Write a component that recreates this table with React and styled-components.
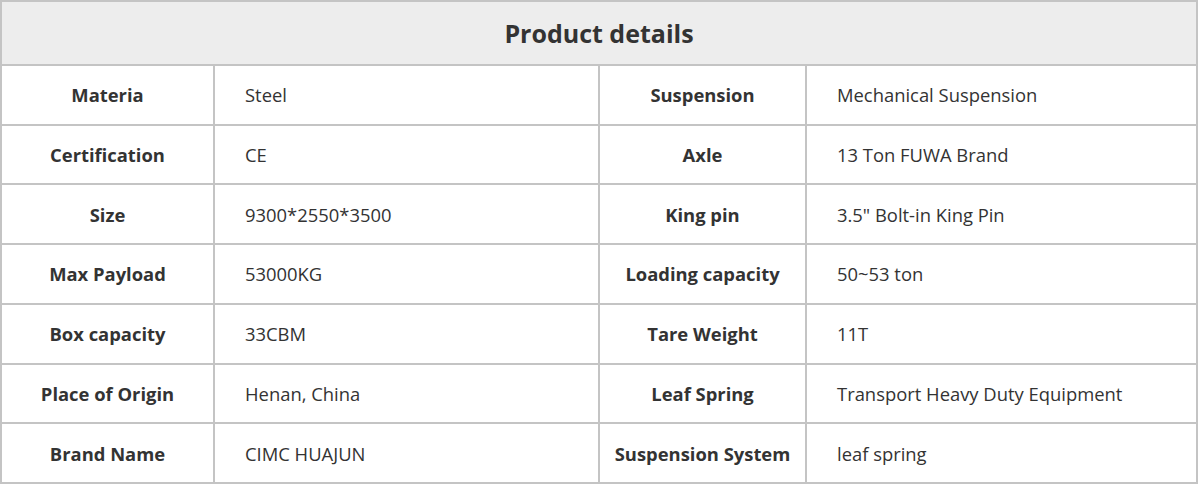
import styled, { createGlobalStyle } from "styled-components";

const Global = createGlobalStyle`
  html, body { margin: 0; padding: 0; background: #fff; }
  body { font-family: "Open Sans", "Noto Sans", sans-serif; }
`;

const rows = [
  ["Materia", "Steel", "Suspension", "Mechanical Suspension"],
  ["Certification", "CE", "Axle", "13 Ton FUWA Brand"],
  ["Size", "9300*2550*3500", "King pin", '3.5" Bolt-in King Pin'],
  ["Max Payload", "53000KG", "Loading capacity", "50~53 ton"],
  ["Box capacity", "33CBM", "Tare Weight", "11T"],
  ["Place of Origin", "Henan, China", "Leaf Spring", "Transport Heavy Duty Equipment"],
  ["Brand Name", "CIMC HUAJUN", "Suspension System", "leaf spring"],
];

const Table = styled.div`
  width: 1198px;
  height: 484px;
  box-sizing: border-box;
  display: grid;
  grid-template-columns: 211px 383px 205px 389px;
  grid-template-rows: 62px repeat(7, 1fr);
  gap: 2px;
  padding: 2px;
  background: #c4c4c4;
`;

const Title = styled.div`
  grid-column: 1 / -1;
  background: #ededed;
  display: flex;
  align-items: center;
  justify-content: center;
  font-size: 25px;
  font-weight: 700;
  color: #333;
`;

const Cell = styled.div`
  background: #fff;
  display: flex;
  align-items: center;
  justify-content: ${(p) => (p.$label ? "center" : "flex-start")};
  padding: ${(p) => (p.$label ? "0" : "0 0 0 30px")};
  font-size: 18.4px;
  font-weight: ${(p) => (p.$label ? 700 : 400)};
  color: #333;
  white-space: nowrap;
`;

const App = () => {
  return (
    <>
      <Global />
      <Table>
        <Title>Product details</Title>
        {rows.map((r) => (
          <>
            <Cell $label key={r[0]}>{r[0]}</Cell>
            <Cell>{r[1]}</Cell>
            <Cell $label>{r[2]}</Cell>
            <Cell>{r[3]}</Cell>
          </>
        ))}
      </Table>
    </>
  );
};

export default App;
